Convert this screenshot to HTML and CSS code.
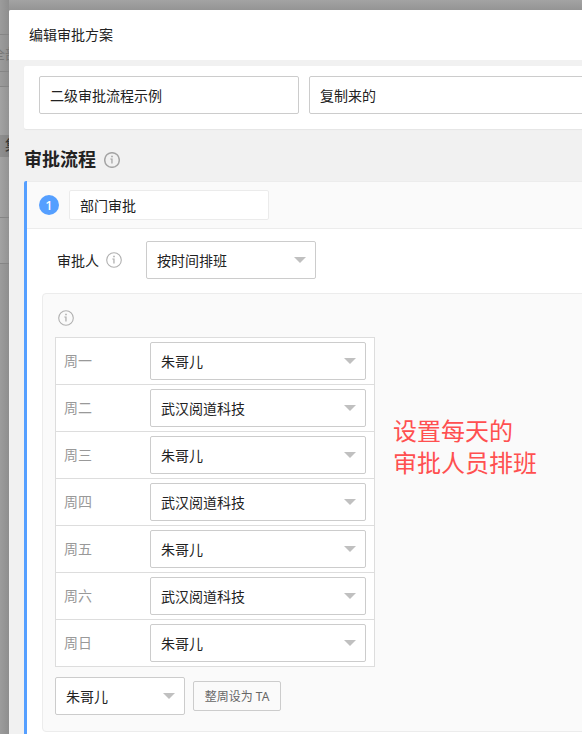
FILE: index.html
```html
<!DOCTYPE html>
<html lang="zh-CN">
<head>
<meta charset="utf-8">
<title>编辑审批方案</title>
<link rel="stylesheet" href="styles.css">
</head>
<body>
<svg width="0" height="0" class="defs"><defs>
<symbol id="info" viewBox="0 0 16 16"><circle cx="8" cy="8" r="7.3" fill="none" stroke="currentColor" stroke-width="var(--ring, 1.1)"/><path d="M7.2 3.8h1.6v1.5H7.2zM6.3 6.6h2.3v4.8H7.3V7.4h-1z" fill="currentColor"/></symbol>
</defs></svg>
<div class="screen">
<aside class="backdrop">
<div class="strip top"></div><div class="strip field"><span>全部</span></div><div class="strip gap"></div><div class="strip list"></div><div class="strip active"><span>集</span></div><div class="strip row"></div><div class="strip row2"></div>
</aside>
<main class="modal">
<header class="title">编辑审批方案</header>
<div class="content">
<section class="card"><div class="box name">二级审批流程示例</div><div class="box desc">复制来的</div></section>
<h2><span>审批流程</span><svg class="info"><use href="#info"/></svg></h2>
<section class="step">
<div class="step-head"><span class="num">1</span><div class="step-name">部门审批</div></div>
<div class="approver"><span>审批人</span><svg class="info"><use href="#info"/></svg><div class="box select type">按时间排班</div></div>
<div class="panel">
<svg class="info"><use href="#info"/></svg>
<div class="schedule">
<div class="week">
<div class="day"><span>周一</span><div class="box select">朱哥儿</div></div>
<div class="day"><span>周二</span><div class="box select">武汉阅道科技</div></div>
<div class="day"><span>周三</span><div class="box select">朱哥儿</div></div>
<div class="day"><span>周四</span><div class="box select">武汉阅道科技</div></div>
<div class="day"><span>周五</span><div class="box select">朱哥儿</div></div>
<div class="day"><span>周六</span><div class="box select">武汉阅道科技</div></div>
<div class="day"><span>周日</span><div class="box select">朱哥儿</div></div>
</div>
<p class="note">设置每天的<br>审批人员排班</p>
</div>
<div class="bulk"><div class="box select">朱哥儿</div><button>整周设为 TA</button></div>
</div>
</section>
</div>
</main>
</div>
</body>
</html>
```
FILE: styles.css
```css
* { box-sizing: border-box; }
body { margin: 0; font: 14px/20px "Noto Sans", "Noto Sans CJK SC", sans-serif; color: #222; overflow: hidden; }
.defs { display: block; height: 0; }
.screen { display: flex; width: 582px; height: 734px; padding-top: 10px; overflow: hidden; background: linear-gradient(#a3a3a3, #949494 10px, #949494); }
.backdrop { flex: 0 0 9px; margin-top: -10px; overflow: hidden; background: linear-gradient(90deg, #9c9c9c, #8e8e8e); }
.strip { overflow: hidden; white-space: nowrap; border-bottom: 1px solid #858585; }
.strip span { display: block; }
.top { height: 35px; }
.field { height: 37px; padding-top: 9px; color: #777; }
.field span { margin-left: -9px; }
.gap { height: 15px; }
.list { height: 48px; background: linear-gradient(90deg, #a3a3a3, #939393); border: 0; }
.active { height: 22px; background: linear-gradient(90deg, #8f8f8f, #828282); border: 0; }
.active span { margin-left: 5px; color: #333; }
.row { height: 61px; background: linear-gradient(90deg, #a3a3a3, #939393); }
.row2 { height: 46px; background: linear-gradient(90deg, #a3a3a3, #939393); }
.modal { flex: 0 0 620px; height: 724px; overflow: hidden; background: #f1f1f1; border-radius: 2px 0 0; }
.title { height: 50px; padding: 15px 20px; background: #fff; }
.content { padding: 6px 0 0 15px; }
.card { display: flex; gap: 10px; height: 63px; padding: 10px 15px; background: #fff; border-radius: 2px; box-shadow: 0 1px 1px #e5e5e5; }
.box { height: 38px; padding: 9px 10px 7px; border: 1px solid #ccc; border-radius: 2px; background: #fff; }
.name { width: 260px; }
.desc { flex: 1; }
h2 { display: flex; align-items: center; height: 20px; margin: 21px 0 11px; font-size: 18px; line-height: 20px; font-weight: 700; }
h2 span { padding-bottom: 2px; }
.info { width: 16px; height: 16px; color: #b0b0b0; flex: none; }
h2 .info { --ring: 1.5; margin-left: 8px; color: #a5a5a5; }
.info use { stroke-width: 1.1; }
.step { border-left: 3px solid #559fff; border-radius: 2px 0 0; background: #fff; height: 570px; }
.step-head { display: flex; align-items: center; gap: 10px; height: 48px; padding-left: 12px; background: #fafafa; border: solid #ececec; border-width: 1px 0; }
.num { width: 20px; height: 20px; border-radius: 50%; background: #559fff; color: #fff; text-align: center; font-size: 13px; line-height: 20px; font-weight: 500; }
.step-name { width: 200px; height: 30px; padding: 5px 10px; border: 1px solid #ebebeb; border-radius: 2px; background: #fff; }
.approver { display: flex; align-items: center; padding: 12px 0 14px 30px; }
.approver > span { padding-top: 2px; }
.approver .info { margin: 0 24px 0 7px; }
.select { display: flex; align-items: center; justify-content: space-between; padding: 2px 9px 0 10px; }
.select::after { content: ""; margin-bottom: 3px; border: solid transparent; border-width: 6px 6px 0; border-top-color: #c0c0c0; }
.type { width: 170px; }
.panel { margin-left: 15px; height: 439px; padding: 16px 0 0 12px; border: 1px solid #ececec; border-radius: 4px; background: #fafafa; }
.panel > .info { display: block; margin-left: 3px; }
.schedule { display: flex; margin-top: 11px; }
.week { width: 320px; border: solid #ddd; border-width: 1px 1px 0; background: #fff; }
.day { display: flex; align-items: center; height: 47px; padding: 0 8px; border-bottom: 1px solid #ddd; }
.day span { width: 86px; color: #999; }
.day .select { width: 216px; }
.note { margin: 78px 0 0 18px; font-size: 24px; line-height: 32px; color: #ff5050; font-weight: 400; }
.bulk { display: flex; align-items: center; gap: 8px; margin-top: 10px; }
.bulk .select { width: 130px; }
button { width: 88px; height: 30px; padding: 2px 0 0; border: 1px solid #ccc; border-radius: 2px; background: #fafafa; color: #666; font: 12px/20px "Noto Sans", "Noto Sans CJK SC", sans-serif; }
```
